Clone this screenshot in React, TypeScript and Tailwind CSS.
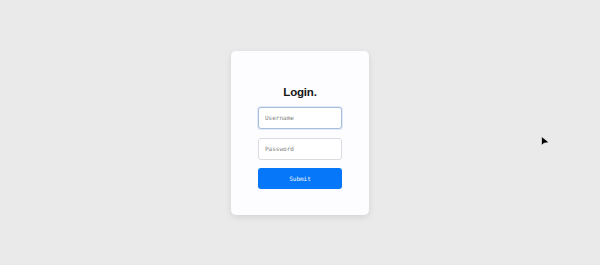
export default function App() {
  return (
    <div className="relative flex h-[265px] w-full items-center justify-center bg-[#ebeaeb]">
      <div className="flex w-[138px] flex-col items-center rounded-[5px] bg-[#fdfcfe] pt-[33px] pb-[26px] shadow-[0_2px_6px_rgba(0,0,0,0.1)]">
        <h1 className="mb-[7px] text-[11.5px] leading-[16px] font-bold tracking-[-0.2px] text-[#151515] [font-family:'Liberation_Sans',Arial,sans-serif]">
          Login.
        </h1>
        <form className="flex w-[84px] flex-col gap-[9px]" onSubmit={(e) => e.preventDefault()}>
          <input
            placeholder="Username"
            className="h-[22px] w-full rounded-[3px] border border-[#a9bedb] bg-white px-[6px] text-[6px] outline-none shadow-[0_0_0_1px_rgba(120,160,220,0.2)] [font-family:'DejaVu_Sans_Mono',monospace] placeholder:text-[#7d7d7d]"
          />
          <input
            placeholder="Password"
            type="password"
            className="h-[22px] w-full rounded-[3px] border border-[#dcdce0] bg-white px-[6px] text-[6px] outline-none [font-family:'DejaVu_Sans_Mono',monospace] placeholder:text-[#7d7d7d]"
          />
          <button
            type="submit"
            className="mt-[-1px] h-[21px] w-full rounded-[3px] bg-[#0577f8] text-[6px] text-[#eef4ff] [font-family:'DejaVu_Sans_Mono',monospace]"
          >
            Submit
          </button>
        </form>
      </div>
      {/* mouse pointer */}
      <svg className="absolute left-[541px] top-[136px]" width="9" height="11" viewBox="0 0 9 11">
        <path d="M0.5 0.5 L0.5 9.5 L3 7.2 L8 6.5 Z" fill="#000" stroke="#fff" strokeWidth="0.6" />
      </svg>
    </div>
  );
}
